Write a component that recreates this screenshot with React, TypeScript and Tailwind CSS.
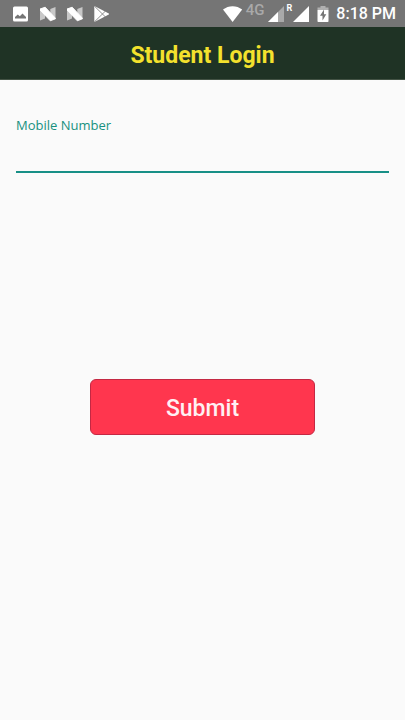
import { useState } from 'react';

function PictureIcon() {
  return (
    <svg className="h-4 w-4" viewBox="0 0 16 16" aria-hidden="true">
      <rect x="0" y="0.5" width="15" height="15" rx="1.5" fill="#fff" />
      <path d="M2 12.5V11L4.8 8.5 6.8 10.3 9.5 7.5 13 11V12.5Z" fill="#757575" />
    </svg>
  );
}

function NougatIcon() {
  return (
    <svg className="h-4 w-4" viewBox="0 0 16 16" aria-hidden="true">
      <path d="M0 3 5 1.2V12.6L0 14.4Z" fill="#c8c8c8" />
      <path d="M10.3 3 15.5 1V12.5L10.3 14.5Z" fill="#c8c8c8" />
      <path d="M0 3 5.2 1.2 15.5 12.3V12.8L10.3 14.8 0 4Z" fill="#fff" stroke="#fff" strokeWidth="0.9" strokeLinejoin="round" />
    </svg>
  );
}

function PlayStoreIcon() {
  return (
    <svg className="h-4 w-4" viewBox="0 0 16 16" aria-hidden="true">
      <path d="M0.3 1.2Q0.3 0 1.4 0.5L14.8 7.5Q15.4 8 14.8 8.5L1.4 15.5Q0.3 16 0.3 14.8Z" fill="#fff" />
      <path d="M0.8 0.5 11.5 11M0.8 15.5 11.5 5" stroke="#757575" strokeWidth="0.8" fill="none" />
    </svg>
  );
}

function WifiIcon() {
  return (
    <svg className="h-4 w-5" viewBox="0 0 20 16" aria-hidden="true">
      <path d="M0 3.6C5.6-0.9 13.6-0.9 19.2 3.6L9.6 16Z" fill="#fff" />
    </svg>
  );
}

function SignalIcon({ partial = false }: { partial?: boolean }) {
  return (
    <svg className="h-4 w-4" viewBox="0 0 16 16" aria-hidden="true">
      <path d="M16 0V16H0Z" fill={partial ? '#a9a9a9' : '#fff'} />
      {partial && <path d="M10 6V16H0Z" fill="#fff" />}
    </svg>
  );
}

function BatteryIcon() {
  return (
    <svg className="h-4 w-3" viewBox="0 0 12 16" aria-hidden="true">
      <path d="M3.5 0H8.5V1.5H11.5V4H0.5V1.5H3.5Z" fill="#b0b0b0" />
      <path d="M0.5 4H11.5V15.2Q11.5 16 10.7 16H1.3Q0.5 16 0.5 15.2Z" fill="#fff" />
      <path d="M7 3.5 3 9.8H5.5V14.5L9.3 8.2H7Z" fill="#757575" />
    </svg>
  );
}

function StatusBar() {
  return (
    <div className="flex h-[27px] items-center justify-between bg-[#757575] pr-[9px] pl-[13px] text-white">
      <div className="flex items-center gap-[11px]">
        <PictureIcon />
        <NougatIcon />
        <NougatIcon />
        <PlayStoreIcon />
      </div>
      <div className="flex h-full items-center">
        <WifiIcon />
        <span className="ml-[3px] self-start text-[15px] leading-5 font-medium text-[#a9a9a9]">4G</span>
        <span className="ml-[3px] flex">
          <SignalIcon partial />
        </span>
        <span className="ml-[3px] self-start text-[9px] leading-[17px] font-bold">R</span>
        <span className="ml-px flex">
          <SignalIcon />
        </span>
        <span className="ml-2 flex">
          <BatteryIcon />
        </span>
        <span className="ml-[7px] text-base leading-[28px] font-medium">8:18 PM</span>
      </div>
    </div>
  );
}

export default function App() {
  const [mobile, setMobile] = useState('');

  return (
    <div className="min-h-screen bg-[#fafafa] font-['Roboto',sans-serif]">
      <StatusBar />
      <header className="flex h-[53px] items-center justify-center border-b border-[#435345] bg-[#1f3325] pt-1.5">
        <h1 className="text-[23px] leading-7 font-bold text-[#f3e12d]">Student Login</h1>
      </header>
      <form className="px-4 pt-9" onSubmit={(event) => event.preventDefault()}>
        <label
          htmlFor="mobile"
          className="block font-['Open_Sans',sans-serif] text-[13px] leading-[18px] text-[#18917f]"
        >
          Mobile Number
        </label>
        <input
          id="mobile"
          type="tel"
          value={mobile}
          onChange={(event) => setMobile(event.target.value)}
          className="block h-[39px] w-full border-b-2 border-[#178f86] bg-transparent text-lg outline-none"
        />
        <button
          type="submit"
          className="mx-auto mt-[206px] block h-14 w-[225px] max-w-full rounded-md border border-[#c42843] bg-[#ff364e] pt-1 text-[23px] leading-7 font-medium text-[#fff0f3]"
        >
          Submit
        </button>
      </form>
    </div>
  );
}
